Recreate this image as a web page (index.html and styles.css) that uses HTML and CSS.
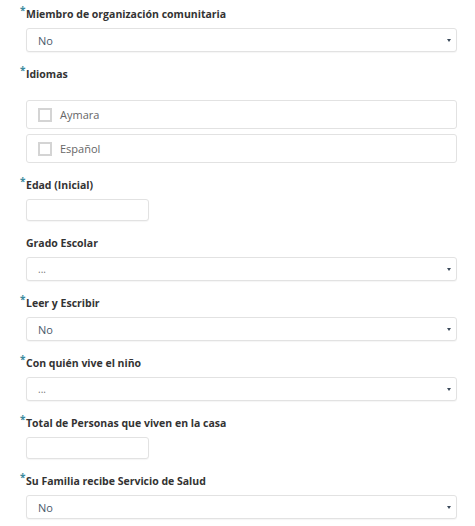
FILE: index.html
```html
<!DOCTYPE html>
<html lang="es">
<head>
<meta charset="utf-8">
<link rel="stylesheet" href="styles.css">
</head>
<body>
<form class="form">
  <div class="field">
    <label class="label"><span class="req">*</span>Miembro de organización comunitaria</label>
    <div class="select"><span class="value">No</span><span class="caret"></span></div>
  </div>

  <div class="field">
    <label class="label"><span class="req">*</span>Idiomas</label>
    <div class="checks">
      <div class="check"><span class="box"></span><span class="check-text">Aymara</span></div>
      <div class="check"><span class="box"></span><span class="check-text">Español</span></div>
    </div>
  </div>

  <div class="field">
    <label class="label"><span class="req">*</span>Edad (Inicial)</label>
    <div class="input"></div>
  </div>

  <div class="field">
    <label class="label">Grado Escolar</label>
    <div class="select"><span class="value dots">...</span><span class="caret"></span></div>
  </div>

  <div class="field">
    <label class="label"><span class="req">*</span>Leer y Escribir</label>
    <div class="select"><span class="value">No</span><span class="caret"></span></div>
  </div>

  <div class="field">
    <label class="label"><span class="req">*</span>Con quién vive el niño</label>
    <div class="select"><span class="value dots">...</span><span class="caret"></span></div>
  </div>

  <div class="field">
    <label class="label"><span class="req">*</span>Total de Personas que viven en la casa</label>
    <div class="input"></div>
  </div>

  <div class="field">
    <label class="label"><span class="req">*</span>Su Familia recibe Servicio de Salud</label>
    <div class="select"><span class="value">No</span><span class="caret"></span></div>
  </div>
</form>
</body>
</html>
```

FILE: styles.css
```css
* { box-sizing: border-box; }

html, body {
  margin: 0;
  padding: 0;
  background: #ffffff;
}

body {
  font-family: "Open Sans", "Noto Sans", sans-serif;
  color: #333;
}

.form {
  display: flex;
  flex-direction: column;
  padding: 4px 18px 0 26px;
  width: 475px;
}

.field {
  display: flex;
  flex-direction: column;
  margin-bottom: 12px;
}

.label {
  position: relative;
  display: block;
  height: 20px;
  line-height: 20px;
  margin-bottom: 4px;
  font-size: 10.5px;
  font-weight: 700;
  color: #333;
}

.req {
  position: absolute;
  left: -6px;
  top: -4px;
  font-size: 10px;
  font-weight: 700;
  color: #3d8a9e;
}

.select {
  display: flex;
  align-items: center;
  justify-content: space-between;
  height: 24px;
  padding: 0 5px 0 11px;
  border: 1px solid #e2e2e2;
  border-radius: 3px;
  box-shadow: 0 1px 1px rgba(0,0,0,0.04);
  background: #fff;
}

.value {
  font-size: 11px;
  color: #4a5a6a;
}

.value.dots {
  color: #777;
  font-size: 10px;
}

.caret {
  width: 0;
  height: 0;
  border-left: 2.5px solid transparent;
  border-right: 2.5px solid transparent;
  border-top: 3.5px solid #3b4a5a;
}

.input {
  width: 123px;
  height: 22px;
  border: 1px solid #e2e2e2;
  border-radius: 3px;
  box-shadow: 0 1px 1px rgba(0,0,0,0.04);
  background: #fff;
}

.checks {
  display: flex;
  flex-direction: column;
  gap: 5px;
  margin-top: 12px;
}

.check {
  display: flex;
  align-items: center;
  height: 29px;
  padding-left: 11px;
  border: 1px solid #e2e2e2;
  border-radius: 3px;
  background: #fff;
}

.box {
  width: 14px;
  height: 14px;
  border: 2px solid #d4d4d4;
  margin-right: 8px;
  background: #fff;
}

.check-text {
  font-size: 11px;
  color: #666;
}
```
